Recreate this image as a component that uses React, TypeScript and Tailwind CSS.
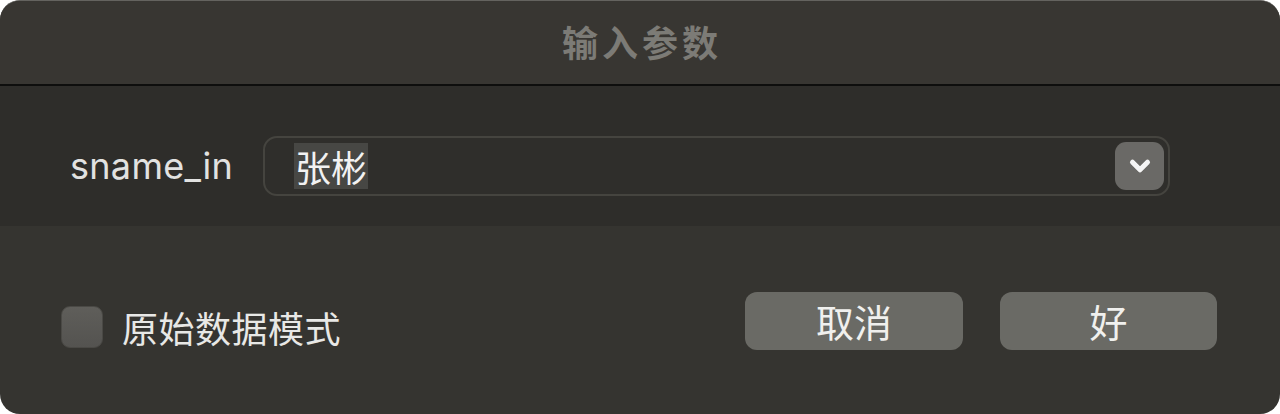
import { ChevronDown } from 'lucide-react';

const cjk = '"Noto Sans CJK SC", "Noto Sans", sans-serif';
const latin = 'Inter, "Noto Sans CJK SC", sans-serif';

export default function App() {
  return (
    <div className="w-[1280px] h-[414px] bg-white">
      <div className="w-full h-full rounded-[20px] overflow-hidden flex flex-col bg-[#353430] border-t border-[#64635f]">
        {/* Title bar */}
        <div className="h-[83px] flex items-center justify-center bg-[#383632] pb-[4px]">
          <span
            className="text-[36px] font-bold tracking-[4px] text-[#7c7b76] leading-none pl-[4px]"
            style={{ fontFamily: cjk }}
          >
            输入参数
          </span>
        </div>
        <div className="h-[2px] bg-[#0e0e0d]" />

        {/* Parameter row */}
        <div className="h-[140px] bg-[#2e2d2a] flex items-center pl-[70px] pt-[20px]">
          <span
            className="w-[193px] text-[36px] tracking-[0.3px] text-[#e2e2e1] leading-none"
            style={{ fontFamily: latin }}
          >
            sname_in
          </span>
          <div className="w-[907px] h-[60px] rounded-[14px] border-2 border-[#45443f] bg-[#2f2e2b] flex items-center pl-[29px] pr-[4px]">
            <span
              className="bg-[#474744] px-[1px] h-[46px] flex items-center text-[36px] text-[#f2f2f2] leading-none"
              style={{ fontFamily: cjk }}
            >
              张彬
            </span>
            <div className="ml-auto w-[49px] h-[48px] rounded-[11px] bg-[#6a6966] flex items-center justify-center">
              <ChevronDown size={30} strokeWidth={4} color="#f5f5f5" />
            </div>
          </div>
        </div>

        {/* Footer */}
        <div className="flex-1 flex items-start pt-[66px] pl-[61px] pr-[63px]">
          <div className="flex items-center mt-[14px]">
            <div className="w-[42px] h-[42px] rounded-[9px] bg-gradient-to-b from-[#5f5e5a] to-[#545350] border border-[#4a4945]" />
            <span
              className="ml-[19px] text-[36px] tracking-[0.5px] text-[#e8e8e6] leading-none"
              style={{ fontFamily: cjk }}
            >
              原始数据模式
            </span>
          </div>
          <div className="ml-auto flex gap-[37px]">
            <button
              className="w-[218px] h-[58px] rounded-[12px] bg-[#6a6a65] text-[38px] text-[#f0f0ee] leading-none flex items-center justify-center"
              style={{ fontFamily: cjk }}
            >
              取消
            </button>
            <button
              className="w-[217px] h-[58px] rounded-[12px] bg-[#6a6a65] text-[38px] text-[#f0f0ee] leading-none flex items-center justify-center"
              style={{ fontFamily: cjk }}
            >
              好
            </button>
          </div>
        </div>
      </div>
    </div>
  );
}
